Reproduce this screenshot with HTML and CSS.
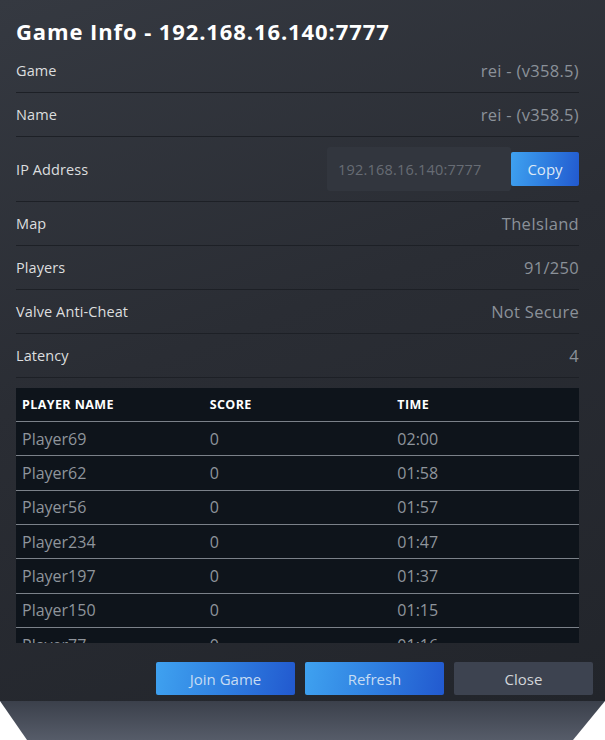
FILE: index.html
```html
<!DOCTYPE html>
<html>
<head>
<meta charset="utf-8">
<link rel="stylesheet" href="styles.css">
</head>
<body>
<div class="dialog">
  <h1 class="title">Game Info - 192.168.16.140:7777</h1>
  <div class="row"><span class="label">Game</span><span class="value">rei - (v358.5)</span></div>
  <div class="row"><span class="label">Name</span><span class="value">rei - (v358.5)</span></div>
  <div class="row row-ip"><span class="label">IP Address</span>
    <div class="ip-group"><div class="ip-field">192.168.16.140:7777</div><button class="btn btn-blue btn-copy">Copy</button></div>
  </div>
  <div class="row"><span class="label">Map</span><span class="value">TheIsland</span></div>
  <div class="row"><span class="label">Players</span><span class="value">91/250</span></div>
  <div class="row"><span class="label">Valve Anti-Cheat</span><span class="value">Not Secure</span></div>
  <div class="row"><span class="label">Latency</span><span class="value">4</span></div>
  <div class="table">
    <div class="thead"><span>Player Name</span><span>Score</span><span>Time</span></div>
    <div class="tr"><span>Player69</span><span>0</span><span>02:00</span></div>
    <div class="tr"><span>Player62</span><span>0</span><span>01:58</span></div>
    <div class="tr"><span>Player56</span><span>0</span><span>01:57</span></div>
    <div class="tr"><span>Player234</span><span>0</span><span>01:47</span></div>
    <div class="tr"><span>Player197</span><span>0</span><span>01:37</span></div>
    <div class="tr"><span>Player150</span><span>0</span><span>01:15</span></div>
    <div class="tr"><span>Player77</span><span>0</span><span>01:16</span></div>
  </div>
  <div class="footer">
    <button class="btn btn-blue">Join Game</button>
    <button class="btn btn-blue">Refresh</button>
    <button class="btn btn-grey">Close</button>
  </div>
</div>
<div class="backdrop"></div>
</body>
</html>
```
FILE: styles.css
```css
html, body {
  margin: 0;
  padding: 0;
  background: #ffffff;
}
body {
  width: 605px;
  height: 740px;
  overflow: hidden;
  font-family: "Open Sans", Roboto, Arial, sans-serif;
}
.dialog {
  height: 701px;
  box-sizing: border-box;
  padding: 14px 26px 0 16px;
  background: linear-gradient(160deg, #353941 0%, #2a2d34 45%, #22252b 100%);
  display: flex;
  flex-direction: column;
}
.title {
  margin: 0;
  font-size: 22px;
  line-height: 35px;
  font-weight: 700;
  color: #ffffff;
  letter-spacing: 0.9px;
}
.row {
  height: 44px;
  box-sizing: border-box;
  border-bottom: 1px solid #1d2026;
  display: flex;
  align-items: center;
  justify-content: space-between;
  flex-shrink: 0;
}
.row-ip {
  height: 65px;
}
.label {
  font-size: 14.5px;
  color: #dcdedf;
  letter-spacing: 0.1px;
}
.value {
  font-size: 16.5px;
  color: #8b9199;
  letter-spacing: 0.3px;
}
.ip-group {
  display: flex;
  align-items: center;
}
.ip-field {
  width: 184px;
  height: 44px;
  box-sizing: border-box;
  padding-left: 11px;
  display: flex;
  align-items: center;
  background: #32363e;
  border-radius: 3px;
  font-size: 14.5px;
  color: #676c74;
  letter-spacing: 0.2px;
}
.btn {
  border: none;
  border-radius: 2px;
  font-family: inherit;
  font-size: 15px;
  padding: 0;
  cursor: pointer;
}
.btn-blue {
  background: linear-gradient(100deg, #3fa2f0 0%, #2f7fe0 50%, #2259cf 100%);
  color: #c6dcf3;
}
.btn-grey {
  background: #3d4350;
  color: #d2d5d9;
}
.btn-copy {
  width: 68px;
  height: 34px;
  color: #dde9f6;
}
.table {
  margin-top: 10px;
  height: 255px;
  overflow: hidden;
  background: #0e141b;
  flex-shrink: 0;
}
.thead, .tr {
  display: grid;
  grid-template-columns: 1fr 1fr 1fr;
  align-items: center;
}
.thead span, .tr span {
  padding-left: 6px;
}
.thead {
  height: 33px;
  font-size: 12.5px;
  font-weight: 700;
  text-transform: uppercase;
  color: #ffffff;
  letter-spacing: 0.4px;
}
.tr {
  height: 34.33px;
  box-sizing: border-box;
  border-top: 1.5px solid #7b8189;
  font-size: 16px;
  color: #8f959c;
}
.footer {
  margin-top: 19px;
  margin-right: -14px;
  display: flex;
  justify-content: flex-end;
  gap: 10px;
}
.footer .btn {
  width: 139px;
  height: 33px;
}
.backdrop {
  height: 39px;
  background: linear-gradient(180deg, #3b404b 0%, #565c69 100%);
  clip-path: polygon(0 0, 100% 0, calc(100% - 32px) 100%, 27px 100%);
}
```
